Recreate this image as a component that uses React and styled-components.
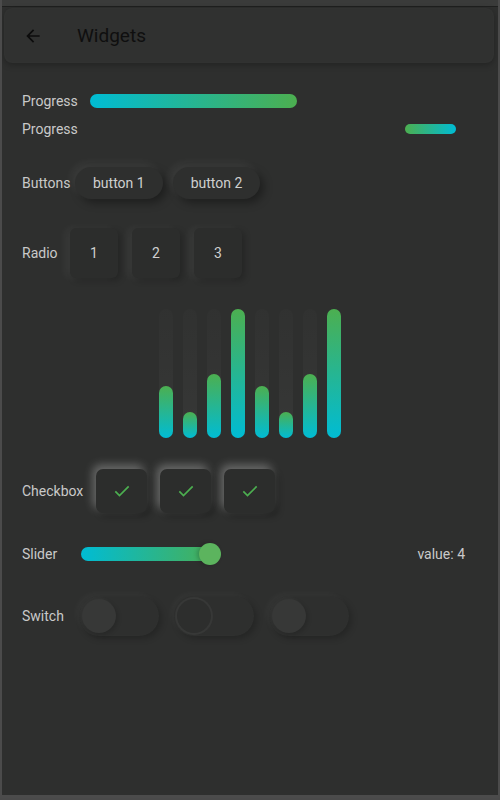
import React from 'react';
import styled, { createGlobalStyle } from 'styled-components';

const GlobalStyle = createGlobalStyle`
  html, body {
    margin: 0;
    padding: 0;
    background: #4a4a4a;
  }
  body {
    font-family: Roboto, "Liberation Sans", sans-serif;
  }
`;

const Frame = styled.div`
  width: 500px;
  height: 798px;
  box-sizing: border-box;
  border-left: 2px solid #4b4b4b;
  border-right: 2px solid #4b4b4b;
  border-bottom: 3px solid #4b4b4b;
  background: #2e2f2e;
  display: flex;
  flex-direction: column;
  overflow: hidden;
`;

const TopStrip = styled.div`
  height: 6px;
  background: #3a3b3a;
  border-bottom: 1px solid #1f201f;
  flex-shrink: 0;
`;

const Header = styled.div`
  margin: 1px 4px 0 2px;
  height: 55px;
  border-radius: 8px;
  background: #303130;
  box-shadow: 0 2px 6px rgba(0, 0, 0, 0.25), inset 0 0 6px rgba(255, 255, 255, 0.02);
  display: flex;
  align-items: center;
  padding-left: 19px;
  gap: 34px;
`;

const Title = styled.h1`
  margin: 0;
  font-size: 19px;
  font-weight: 400;
  color: #0f0f0f;
`;

const Content = styled.div`
  padding: 26px 0 0 20px;
  display: flex;
  flex-direction: column;
`;

const Row = styled.div`
  display: flex;
  align-items: center;
  height: ${p => p.h}px;
  margin-top: ${p => p.mt || 0}px;
  gap: ${p => p.gap || 0}px;
`;

const Label = styled.span`
  font-size: 14px;
  color: #c9c9c9;
  width: ${p => (p.w ? `${p.w}px` : 'auto')};
  flex-shrink: 0;
`;

const Bar = styled.div`
  height: ${p => p.h}px;
  width: ${p => p.w}px;
  border-radius: ${p => p.h / 2}px;
  background: linear-gradient(to right, ${p => (p.reverse ? '#4caf50, #00bcd4' : '#00bcd4, #4caf50')});
`;

const PillButton = styled.button`
  height: 32px;
  padding: 0 18px;
  border: none;
  border-radius: 16px;
  background: #2e2f2e;
  color: #cfcfcf;
  font-family: inherit;
  font-size: 14px;
  box-shadow: -4px -4px 8px rgba(255, 255, 255, 0.06), 4px 4px 8px rgba(0, 0, 0, 0.35);
`;

const RadioBox = styled.div`
  width: 48px;
  height: 50px;
  border-radius: 6px;
  background: #2c2d2c;
  color: #d0d0d0;
  font-size: 14px;
  display: flex;
  align-items: center;
  justify-content: center;
  box-shadow: -5px 0 8px rgba(255, 255, 255, 0.05), 3px 3px 6px rgba(0, 0, 0, 0.2);
`;

const Chart = styled.div`
  display: flex;
  align-items: flex-end;
  gap: 10px;
  margin: 31px 0 0 137px;
  height: 129px;
`;

const Track = styled.div`
  width: 14px;
  height: 129px;
  border-radius: 7px;
  background: linear-gradient(to bottom, rgba(255, 255, 255, 0.012), rgba(255, 255, 255, 0.045));
  display: flex;
  align-items: flex-end;
`;

const Fill = styled.div`
  width: 14px;
  border-radius: 7px;
  background: linear-gradient(to bottom, #4caf50, #00bcd4);
`;

const CheckBox = styled.div`
  width: 51px;
  height: 44px;
  border-radius: 7px;
  background: #2c2d2c;
  display: flex;
  align-items: center;
  justify-content: center;
  box-shadow: -3px -4px 10px rgba(255, 255, 255, 0.3), 3px 3px 6px rgba(0, 0, 0, 0.3);
`;

const SliderTrack = styled.div`
  position: relative;
  width: 139px;
  height: 14px;
  border-radius: 7px;
  background: linear-gradient(to right, #00bcd4, #4caf50);
  margin-left: 5px;
`;

const Thumb = styled.div`
  position: absolute;
  right: -1px;
  top: -4px;
  width: 22px;
  height: 22px;
  border-radius: 50%;
  background: #5cb45e;
  box-shadow: -2px 0 4px rgba(0, 0, 0, 0.2);
`;

const Value = styled.span`
  margin-left: auto;
  margin-right: 33px;
  font-size: 14px;
  color: #c9c9c9;
`;

const Switch = styled.div`
  width: 80px;
  height: 40px;
  border-radius: 20px;
  background: #2e2f2e;
  box-shadow: -3px -3px 6px rgba(255, 255, 255, 0.03), 3px 3px 6px rgba(0, 0, 0, 0.2),
    inset 0 0 4px rgba(255, 255, 255, 0.02);
  display: flex;
  align-items: center;
  padding-left: 3px;
  box-sizing: border-box;
`;

const Knob = styled.div`
  width: 34px;
  height: 34px;
  border-radius: 50%;
  background: ${p => (p.dark ? '#2d2e2d' : '#373837')};
  box-shadow: ${p =>
    p.dark
      ? '0 0 0 2px #373837'
      : '-2px -2px 4px rgba(255,255,255,0.03), 2px 2px 4px rgba(0,0,0,0.15)'};
`;

const BackArrow = () => (
  <svg width="20" height="20" viewBox="0 0 24 24">
    <path d="M20 11H7.83l5.59-5.59L12 4l-8 8 8 8 1.41-1.41L7.83 13H20v-2z" fill="#0c0c0c" />
  </svg>
);

const Check = () => (
  <svg width="20" height="20" viewBox="0 0 24 24">
    <path d="M4 12.5l5 5L20 6.5" fill="none" stroke="#4caf50" strokeWidth="2" />
  </svg>
);

const bars = [40, 20, 50, 100, 40, 20, 50, 100];

export default function App() {
  return (
    <>
      <GlobalStyle />
      <Frame>
        <TopStrip />
        <Header>
          <BackArrow />
          <Title>Widgets</Title>
        </Header>
        <Content>
          <Row h={24} gap={12}>
            <Label>Progress</Label>
            <Bar h={14} w={207} />
          </Row>
          <Row h={24} mt={4}>
            <Label w={383}>Progress</Label>
            <Bar h={10} w={51} reverse />
          </Row>
          <Row h={32} mt={26} gap={10}>
            <Label w={43}>Buttons</Label>
            <PillButton>button 1</PillButton>
            <PillButton>button 2</PillButton>
          </Row>
          <Row h={50} mt={29} gap={14}>
            <Label w={34}>Radio</Label>
            <RadioBox>1</RadioBox>
            <RadioBox>2</RadioBox>
            <RadioBox>3</RadioBox>
          </Row>
          <Chart>
            {bars.map((v, i) => (
              <Track key={i}>
                <Fill style={{ height: `${(v / 100) * 129}px` }} />
              </Track>
            ))}
          </Chart>
          <Row h={44} mt={31} gap={13}>
            <Label w={61}>Checkbox</Label>
            <CheckBox><Check /></CheckBox>
            <CheckBox><Check /></CheckBox>
            <CheckBox><Check /></CheckBox>
          </Row>
          <Row h={22} mt={30}>
            <Label w={54}>Slider</Label>
            <SliderTrack><Thumb /></SliderTrack>
            <Value>value: 4</Value>
          </Row>
          <Row h={40} mt={31} gap={15}>
            <Label w={42}>Switch</Label>
            <Switch><Knob /></Switch>
            <Switch><Knob dark /></Switch>
            <Switch><Knob /></Switch>
          </Row>
        </Content>
      </Frame>
    </>
  );
}
